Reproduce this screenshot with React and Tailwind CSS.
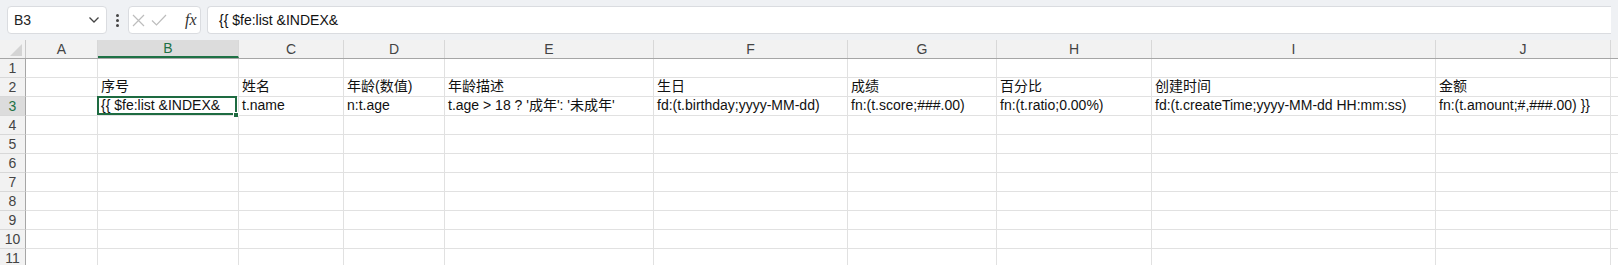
import React from "react";

const cols = [
  { key: "A", w: "w-[72px]" },
  { key: "B", w: "w-[141px]" },
  { key: "C", w: "w-[105px]" },
  { key: "D", w: "w-[101px]" },
  { key: "E", w: "w-[209px]" },
  { key: "F", w: "w-[194px]" },
  { key: "G", w: "w-[149px]" },
  { key: "H", w: "w-[155px]" },
  { key: "I", w: "w-[284px]" },
  { key: "J", w: "w-[175px]" },
  { key: "K", w: "w-[60px]" },
];

const cells = {
  2: {
    B: "序号",
    C: "姓名",
    D: "年龄(数值)",
    E: "年龄描述",
    F: "生日",
    G: "成绩",
    H: "百分比",
    I: "创建时间",
    J: "金额",
  },
  3: {
    B: "{{ $fe:list &INDEX&",
    C: "t.name",
    D: "n:t.age",
    E: "t.age > 18 ? '成年': '未成年'",
    F: "fd:(t.birthday;yyyy-MM-dd)",
    G: "fn:(t.score;###.00)",
    H: "fn:(t.ratio;0.00%)",
    I: "fd:(t.createTime;yyyy-MM-dd HH:mm:ss)",
    J: "fn:(t.amount;#,###.00) }}",
  },
};

const rows = [1, 2, 3, 4, 5, 6, 7, 8, 9, 10, 11];

const Toolbar = () => (
  <div className="flex items-center h-[40px] bg-[#eff1f4] px-[7px] pb-[6px] pt-[6px]">
    {/* Name box */}
    <div className="flex items-center justify-between w-[100px] h-[28px] bg-white border border-[#dadce0] rounded-[4px] pl-[6px] pr-[6px]">
      <span className="text-[14px] text-[#222]">B3</span>
      <svg width="12" height="8" viewBox="0 0 12 8">
        <path d="M1.5 1.5 L6 6 L10.5 1.5" fill="none" stroke="#444" strokeWidth="1.3" />
      </svg>
    </div>
    {/* dots */}
    <div className="w-[21px] flex flex-col items-center justify-center gap-[2px]">
      <span className="w-[3px] h-[3px] rounded-full bg-[#444]" />
      <span className="w-[3px] h-[3px] rounded-full bg-[#444]" />
      <span className="w-[3px] h-[3px] rounded-full bg-[#444]" />
    </div>
    {/* cancel / confirm / fx */}
    <div className="flex items-center w-[73px] h-[28px] bg-white border border-[#dadce0] rounded-[4px] px-[3px]">
      <svg width="13" height="13" viewBox="0 0 13 13">
        <path d="M1 1 L12 12 M12 1 L1 12" stroke="#bdbdbd" strokeWidth="1.2" />
      </svg>
      <svg width="16" height="12" viewBox="0 0 16 12" className="ml-[6px]">
        <path d="M1 6.5 L5.5 11 L15 1" fill="none" stroke="#bdbdbd" strokeWidth="1.2" />
      </svg>
      <span className="ml-[18px] text-[16px] italic text-[#333] leading-none" style={{ fontFamily: '"Liberation Serif", serif' }}>
        fx
      </span>
    </div>
    {/* formula bar */}
    <div className="flex-1 flex items-center h-[28px] ml-[6px] bg-white border border-[#dadce0] border-r-0 rounded-l-[4px] pl-[11px]">
      <span className="text-[14px] text-[#111]">{"{{ $fe:list &INDEX&"}</span>
    </div>
  </div>
);

const App = () => {
  return (
    <div
      className="w-[1618px] h-[265px] overflow-hidden bg-white"
      style={{ fontFamily: '"Liberation Sans", "Noto Sans CJK SC", sans-serif' }}
    >
      <Toolbar />

      {/* column headers */}
      <div className="flex h-[19px] bg-[#f2f2f2] border-b border-[#a6a6a6]">
        <div className="relative w-[26px] shrink-0 border-r border-[#c8c8c8]">
          <svg width="12" height="12" viewBox="0 0 12 12" className="absolute right-[3px] bottom-[2px]">
            <path d="M12 0 L12 12 L0 12 Z" fill="#d4d4d4" />
          </svg>
        </div>
        {cols.map((c) => (
          <div
            key={c.key}
            className={`${c.w} shrink-0 flex items-center justify-center border-r border-[#d8d8d8] text-[14px] leading-none ${
              c.key === "B"
                ? "bg-[#dcdcdc] text-[#1e7145] border-b-2 border-b-[#1e7145]"
                : "text-[#444]"
            }`}
          >
            {c.key === "K" ? "" : c.key}
          </div>
        ))}
      </div>

      {/* rows */}
      {rows.map((r) => (
        <div key={r} className="flex h-[19px]">
          <div
            className={`w-[26px] shrink-0 flex items-center justify-center border-r border-[#a6a6a6] border-b border-b-[#d8d8d8] text-[14px] leading-none ${
              r === 3 ? "bg-[#dcdcdc] text-[#1e7145]" : "bg-[#f2f2f2] text-[#444]"
            }`}
          >
            {r}
          </div>
          {cols.map((c) => {
            const val = cells[r] && cells[r][c.key];
            const selected = r === 3 && c.key === "B";
            return (
              <div
                key={c.key}
                className={`${c.w} shrink-0 relative flex items-end pb-[1px] pl-[3px] border-r border-b border-[#e1e1e1] text-[14px] leading-[17px] text-[#111] whitespace-nowrap`}
              >
                {val}
                {selected && (
                  <>
                    <div className="absolute left-[-1px] top-[-1px] right-[1px] bottom-[0px] border-2 border-[#1e6b41] pointer-events-none" />
                    <div className="absolute right-[-1px] bottom-[-3px] w-[6px] h-[6px] bg-[#1e6b41] border border-white" />
                  </>
                )}
              </div>
            );
          })}
        </div>
      ))}
    </div>
  );
};

export default App;
